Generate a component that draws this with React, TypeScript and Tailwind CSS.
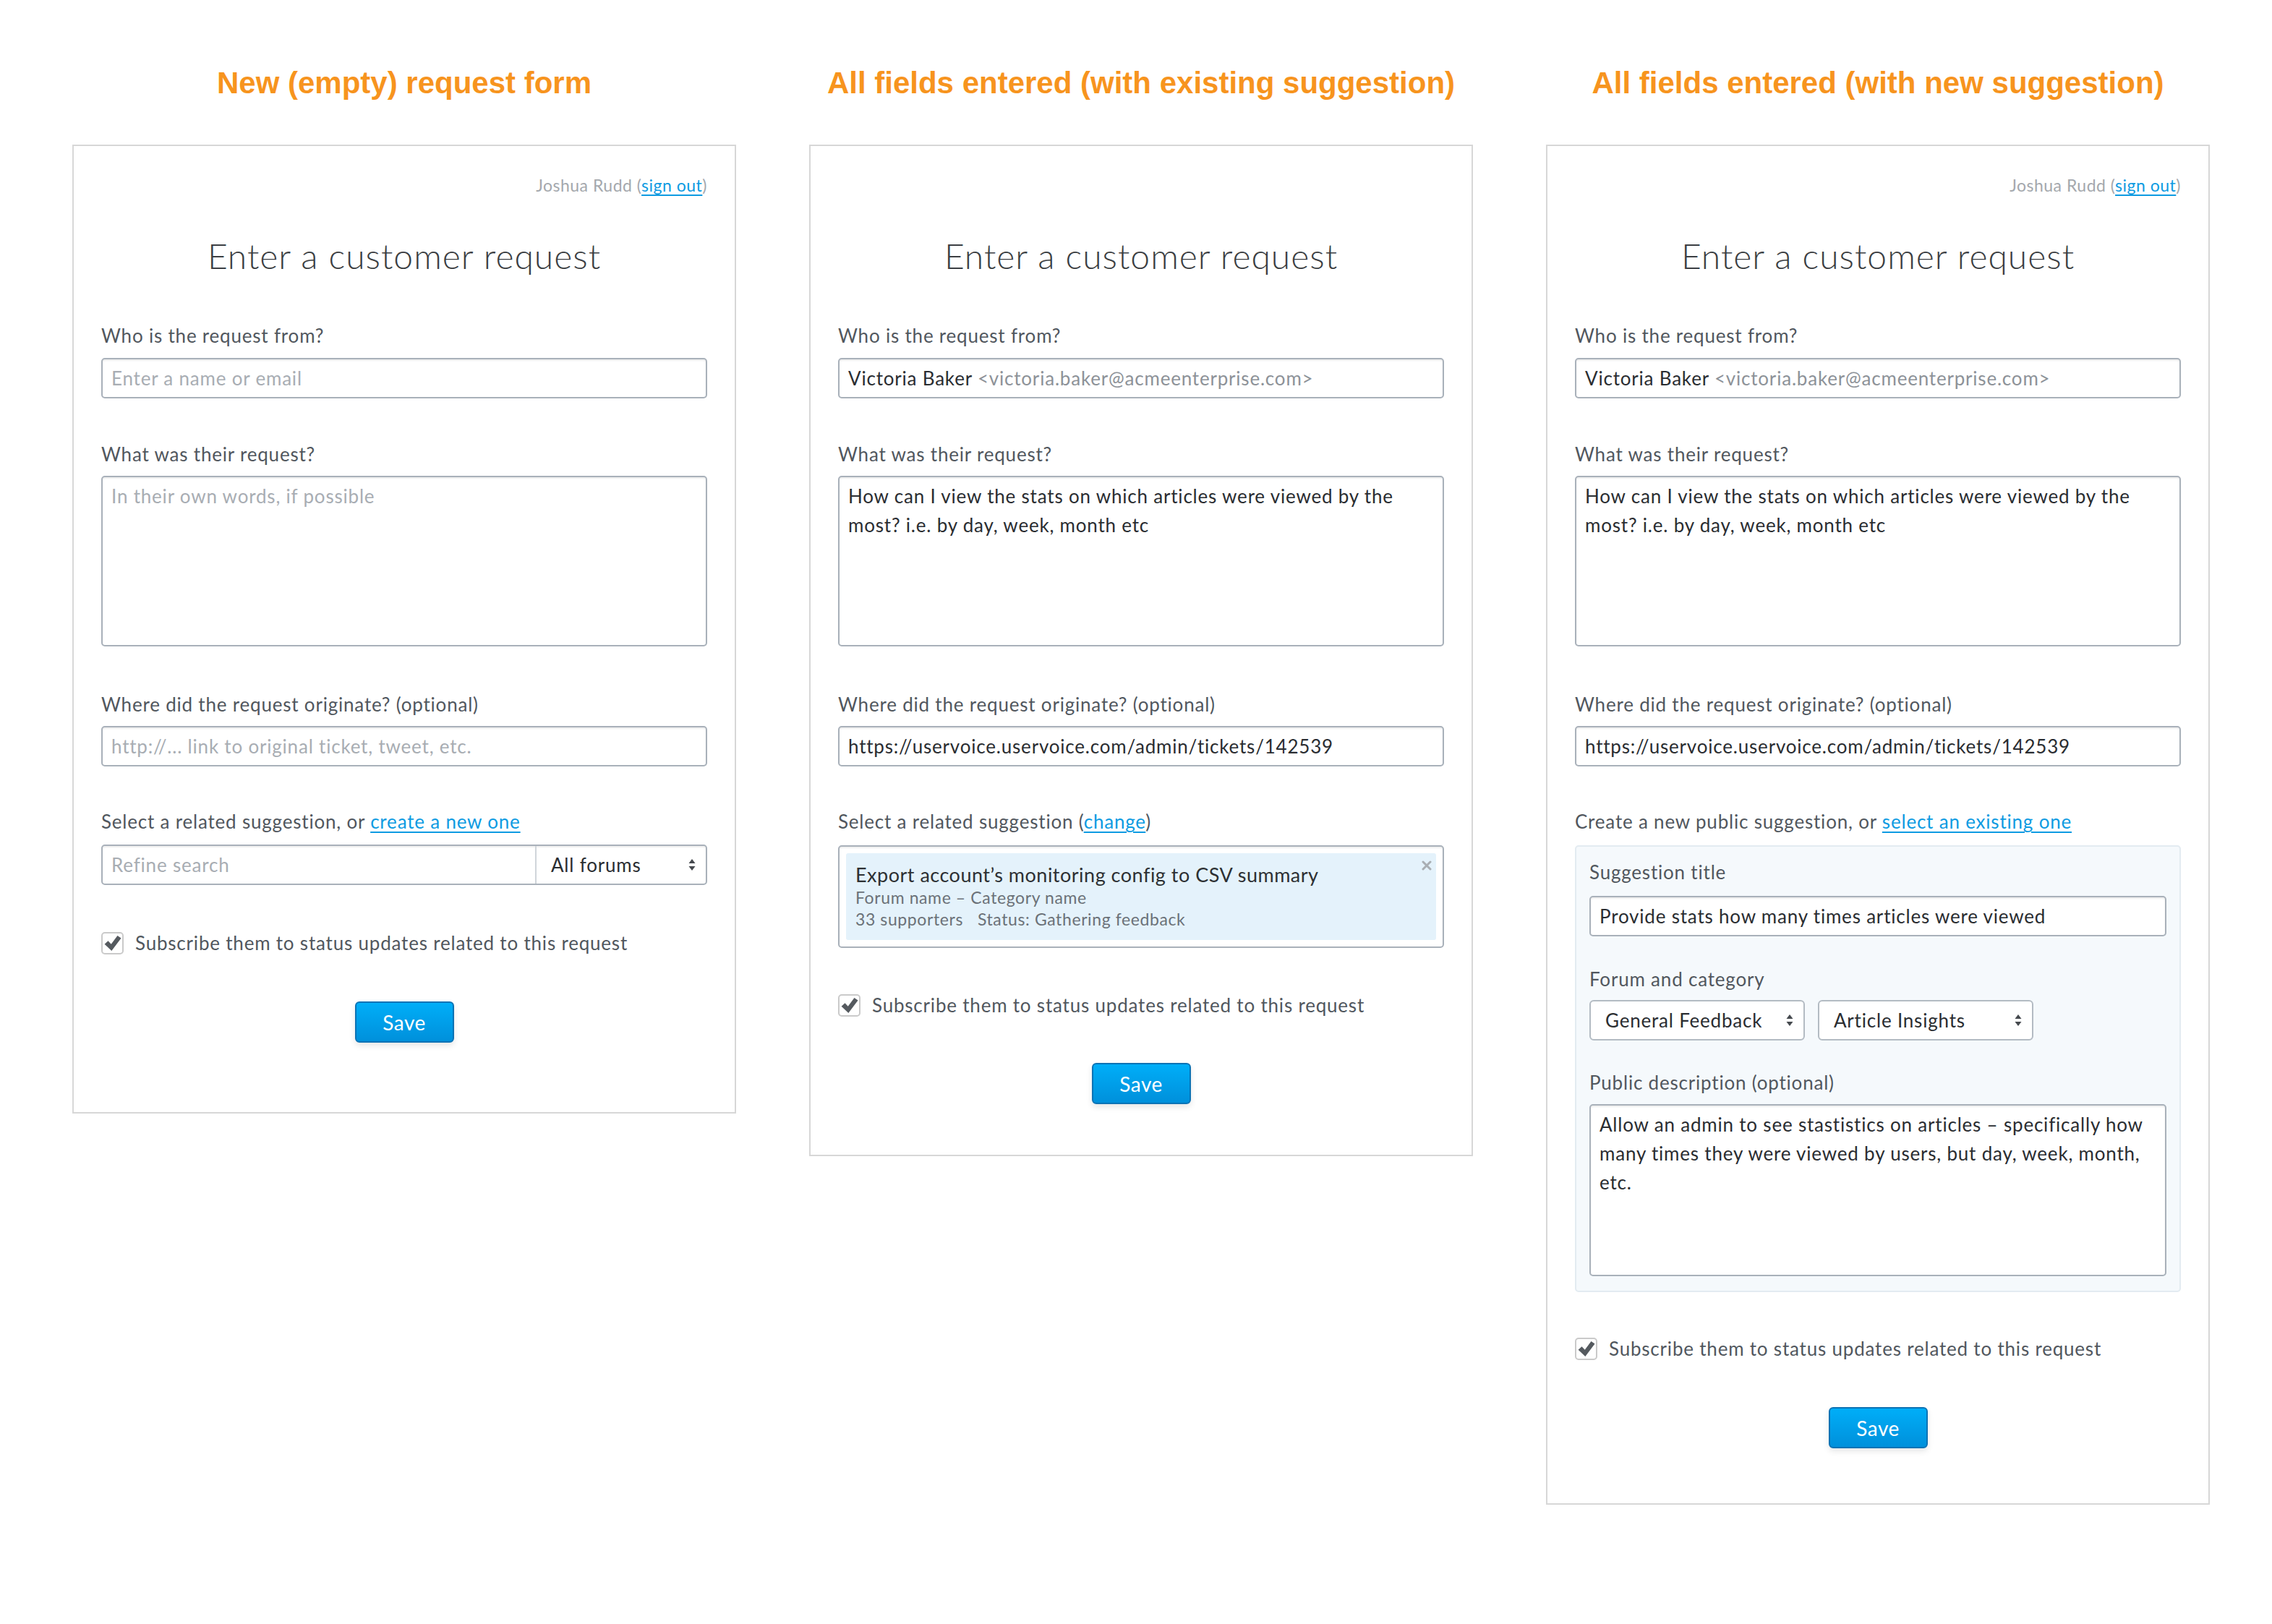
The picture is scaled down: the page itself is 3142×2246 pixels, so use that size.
import React from 'react';

const Label = ({ children, className = '' }: { children: React.ReactNode; className?: string }) => (
  <div className={`text-[26px] leading-[36px] text-[#51575e] ${className}`}>{children}</div>
);

const Link = ({ children }: { children: React.ReactNode }) => (
  <span className="text-[#0e9be2] underline decoration-[2px] underline-offset-[4px]">{children}</span>
);

const Box = ({ children, className = '' }: { children?: React.ReactNode; className?: string }) => (
  <div
    className={`rounded-[5px] border-2 border-[#a9b1ba] bg-white text-[26px] text-[#2a2d31] shadow-[inset_0_2px_2px_rgba(0,0,0,0.07)] ${className}`}
  >
    {children}
  </div>
);

const Arrows = () => (
  <svg width="10" height="18" viewBox="0 0 10 18" className="shrink-0">
    <polygon points="5,1 9.5,7 0.5,7" fill="#45494e" />
    <polygon points="0.5,11 9.5,11 5,17" fill="#45494e" />
  </svg>
);

const Subscribe = ({ className = '' }: { className?: string }) => (
  <div className={`flex items-center gap-[16px] ${className}`}>
    <div className="flex h-[31px] w-[31px] items-center justify-center rounded-[5px] border-2 border-[#cacaca] bg-white">
      <svg width="24" height="23" viewBox="0 0 20 19" className="mt-[1px]">
        <polygon points="0.5,10.5 4.6,6.8 8.1,10.6 15.4,0.8 19.6,3.6 8.6,18.2" fill="#555a5f" />
      </svg>
    </div>
    <span className="text-[26px] leading-[36px] text-[#51575e]">Subscribe them to status updates related to this request</span>
  </div>
);

const SaveButton = ({ className = '' }: { className?: string }) => (
  <button
    className={`mx-auto flex h-[57px] w-[137px] items-center justify-center rounded-[6px] border-2 border-[#0b73b5] bg-linear-to-b from-[#00aef8] to-[#0090db] text-[28px] tracking-[0.5px] text-white shadow-[0_4px_8px_rgba(0,0,0,0.10)] ${className}`}
  >
    Save
  </button>
);

const CardTop = ({ signedIn }: { signedIn: boolean }) => (
  <>
    {signedIn ? (
      <div className="text-right text-[23px] leading-[30px] tracking-[0.5px] text-[#a4a8ad]">
        Joshua Rudd (<Link>sign out</Link>)
      </div>
    ) : (
      <div className="h-[30px]" />
    )}
    <h1 className="mt-[53px] text-center text-[48px] font-light leading-[60px] tracking-[1px] text-[#3b3e42]">
      Enter a customer request
    </h1>
  </>
);

const FilledFields = () => (
  <>
    <Label className="mt-[62px]">Who is the request from?</Label>
    <Box className="mt-[13px] flex h-[56px] items-center px-[12px]">
      <span>Victoria Baker</span>
      <span className="ml-[7px] text-[#8d9298]">&lt;victoria.baker@acmeenterprise.com&gt;</span>
    </Box>

    <Label className="mt-[59px]">What was their request?</Label>
    <Box className="mt-[12px] h-[236px] px-[12px] pt-[6px] leading-[40px]">
      How can I view the stats on which articles were viewed by the most? i.e. by day, week, month etc
    </Box>

    <Label className="mt-[62px]">Where did the request originate? (optional)</Label>
    <Box className="mt-[12px] flex h-[56px] items-center px-[12px]">https://uservoice.uservoice.com/admin/tickets/142539</Box>
  </>
);

const Heading = ({ children }: { children: React.ReactNode }) => (
  <h2 className="mt-[91px] text-center font-['Liberation_Sans',Arial,sans-serif] text-[42px] font-bold leading-[48px] tracking-normal text-[#f7941e]">
    {children}
  </h2>
);

export default function App() {
  return (
    <div className="flex min-h-[2246px] w-[3142px] items-start gap-[101px] bg-white pl-[100px] font-['Lato',sans-serif] tracking-[0.8px]">
      {/* Column 1 */}
      <div className="flex w-[918px] flex-col">
        <Heading>New (empty) request form</Heading>
        <div className="mt-[61px] border-2 border-[#d7d7d7] px-[38px] pb-[96px] pt-[39px]">
          <CardTop signedIn />

          <Label className="mt-[62px]">Who is the request from?</Label>
          <Box className="mt-[13px] flex h-[56px] items-center px-[12px] text-[#a8adb3]">Enter a name or email</Box>

          <Label className="mt-[59px]">What was their request?</Label>
          <Box className="mt-[12px] h-[236px] px-[12px] pt-[6px] leading-[40px] text-[#a8adb3]">In their own words, if possible</Box>

          <Label className="mt-[62px]">Where did the request originate? (optional)</Label>
          <Box className="mt-[12px] flex h-[56px] items-center px-[12px] text-[#a8adb3]">http://... link to original ticket, tweet, etc.</Box>

          <Label className="mt-[58px]">
            Select a related suggestion, or <Link>create a new one</Link>
          </Label>
          <Box className="mt-[14px] flex h-[56px] items-stretch">
            <div className="flex flex-1 items-center px-[12px] text-[#a8adb3]">Refine search</div>
            <div className="flex w-[236px] items-center justify-between border-l-2 border-[#d0d5da] pl-[20px] pr-[14px]">
              <span>All forums</span>
              <Arrows />
            </div>
          </Box>

          <Subscribe className="mt-[62px]" />
          <SaveButton className="mt-[63px]" />
        </div>
      </div>

      {/* Column 2 */}
      <div className="flex w-[918px] flex-col">
        <Heading>All fields entered (with existing suggestion)</Heading>
        <div className="mt-[61px] border-2 border-[#d7d7d7] px-[38px] pb-[70px] pt-[39px]">
          <CardTop signedIn={false} />
          <FilledFields />

          <Label className="mt-[58px]">
            Select a related suggestion (<Link>change</Link>)
          </Label>
          <div className="mt-[15px] rounded-[5px] border-2 border-[#a9b1ba] bg-white p-[9px] shadow-[inset_0_2px_2px_rgba(0,0,0,0.07)]">
            <div className="relative rounded-[3px] bg-[#e4f2fb] px-[13px] py-[14px]">
              <div className="text-[27px] leading-[32px] tracking-[0.5px] text-[#2d3033]">Export account’s monitoring config to CSV summary</div>
              <div className="text-[23px] leading-[30px] tracking-[0.6px] text-[#6b7178]">Forum name – Category name</div>
              <div className="text-[23px] leading-[30px] tracking-[0.6px] text-[#6b7178]">
                33 supporters<span className="ml-[20px]">Status: Gathering feedback</span>
              </div>
              <svg width="14" height="14" viewBox="0 0 14 14" className="absolute right-[6px] top-[10px]">
                <path d="M2 2 L12 12 M12 2 L2 12" stroke="#a9aeb3" strokeWidth="3" strokeLinecap="round" />
              </svg>
            </div>
          </div>

          <Subscribe className="mt-[61px]" />
          <SaveButton className="mt-[62px]" />
        </div>
      </div>

      {/* Column 3 */}
      <div className="flex w-[918px] flex-col">
        <Heading>All fields entered (with new suggestion)</Heading>
        <div className="mt-[61px] border-2 border-[#d7d7d7] px-[38px] pb-[76px] pt-[39px]">
          <CardTop signedIn />
          <FilledFields />

          <Label className="mt-[58px]">
            Create a new public suggestion, or <Link>select an existing one</Link>
          </Label>
          <div className="mt-[15px] rounded-[5px] border-2 border-[#e3ebf1] bg-[#f5f9fc] px-[18px] pb-[20px] pt-[17px]">
            <Label>Suggestion title</Label>
            <Box className="mt-[15px] flex h-[56px] items-center px-[12px]">Provide stats how many times articles were viewed</Box>

            <Label className="mt-[41px]">Forum and category</Label>
            <div className="mt-[11px] flex gap-[18px]">
              <div className="flex h-[56px] w-[298px] items-center justify-between rounded-[6px] border-2 border-[#b3bbc3] bg-white pl-[20px] pr-[14px] text-[26px] text-[#2a2d31]">
                <span>General Feedback</span>
                <Arrows />
              </div>
              <div className="flex h-[56px] w-[298px] items-center justify-between rounded-[6px] border-2 border-[#b3bbc3] bg-white pl-[20px] pr-[14px] text-[26px] text-[#2a2d31]">
                <span>Article Insights</span>
                <Arrows />
              </div>
            </div>

            <Label className="mt-[40px]">Public description (optional)</Label>
            <Box className="mt-[12px] h-[238px] px-[12px] pt-[6px] leading-[40px]">
              Allow an admin to see stastistics on articles – specifically how many times they were viewed by users, but day, week, month, etc.
            </Box>
          </div>

          <Subscribe className="mt-[60px]" />
          <SaveButton className="mt-[63px]" />
        </div>
      </div>
    </div>
  );
}
